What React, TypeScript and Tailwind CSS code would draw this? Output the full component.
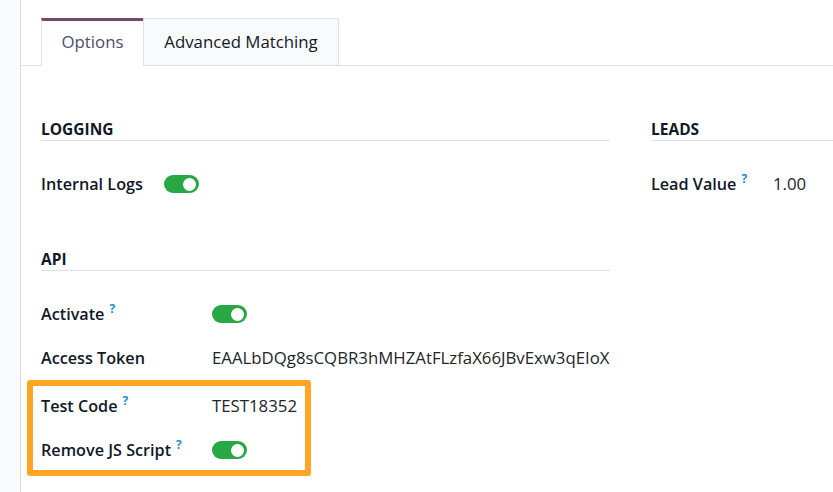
import React from "react";

const Q = () => (
  <span className="ml-[5px] text-[12px] font-bold text-[#1a8fc4] relative top-[-7px] leading-none">?</span>
);

const Toggle = () => (
  <div className="w-[35px] h-[18px] rounded-full bg-[#28a745] flex items-center justify-end pr-[3px]">
    <div className="w-[13px] h-[13px] rounded-full bg-white" />
  </div>
);

const Heading = ({ children }: { children: React.ReactNode }) => (
  <div className="h-[23px] border-b border-[#dee2e6] flex items-center text-[15.5px] font-bold uppercase text-[#111827] leading-none pt-[1px]">
    {children}
  </div>
);

const Row = ({
  label,
  help,
  labelW,
  children,
  className = "",
}: {
  label: string;
  help?: boolean;
  labelW: string;
  children: React.ReactNode;
  className?: string;
}) => (
  <div className={"h-[44px] flex items-center " + className}>
    <div className={labelW + " font-semibold text-[16.2px] text-[#111827] whitespace-nowrap"}>
      {label}
      {help && <Q />}
    </div>
    <div className="text-[#212529] text-[16.8px]">{children}</div>
  </div>
);

export default function App() {
  return (
    <div
      className="relative w-[833px] h-[492px] flex bg-white overflow-hidden text-[16.8px]"
      style={{ fontFamily: '"Open Sans", "Noto Sans", sans-serif' }}
    >
      <div className="w-[21px] shrink-0 bg-[#f9fafb] border-r border-[#d8dadd]" />
      <div className="flex-1 flex flex-col min-w-0">
        <div className="pt-[18px] pl-[20px] border-b border-[#dee2e6] flex h-[66px]">
          <div className="w-[102px] h-[48px] bg-white border-t-[3px] border-t-[#714b67] border-l border-l-[#dee2e6] flex items-center justify-center text-[#4e4b6e] pb-[3px]">
            Options
          </div>
          <div className="w-[196px] h-[47px] bg-[#f9fafb] border border-[#dee2e6] border-b-0 flex items-center justify-center text-[#111827]">
            Advanced Matching
          </div>
        </div>
        <div className="flex pl-[20px] pt-[52px]">
          <div className="w-[569px] shrink-0">
            <Heading>Logging</Heading>
            <div className="mt-[21px]">
              <Row label="Internal Logs" labelW="w-[123px]">
                <Toggle />
              </Row>
            </div>
            <div className="mt-[42px]">
              <Heading>API</Heading>
            </div>
            <div className="mt-[21px]">
              <Row label="Activate" help labelW="w-[171px]">
                <Toggle />
              </Row>
              <Row label="Access Token" labelW="w-[171px]">
                <span className="whitespace-nowrap">EAALbDQg8sCQBR3hMHZAtFLzfaX66JBvExw3qEIoX</span>
              </Row>
              <Row label="Test Code" help labelW="w-[171px]" className="mt-[4px]">
                TEST18352
              </Row>
              <Row label="Remove JS Script" help labelW="w-[171px]">
                <Toggle />
              </Row>
            </div>
          </div>
          <div className="ml-[41px] flex-1">
            <Heading>Leads</Heading>
            <div className="mt-[21px]">
              <Row label="Lead Value" help labelW="w-[122px]">
                1.00
              </Row>
            </div>
          </div>
        </div>
      </div>
      <div className="absolute left-[27px] top-[380px] w-[284px] h-[96px] border-[6px] border-[#ffa526] rounded-[3px] pointer-events-none" />
    </div>
  );
}
